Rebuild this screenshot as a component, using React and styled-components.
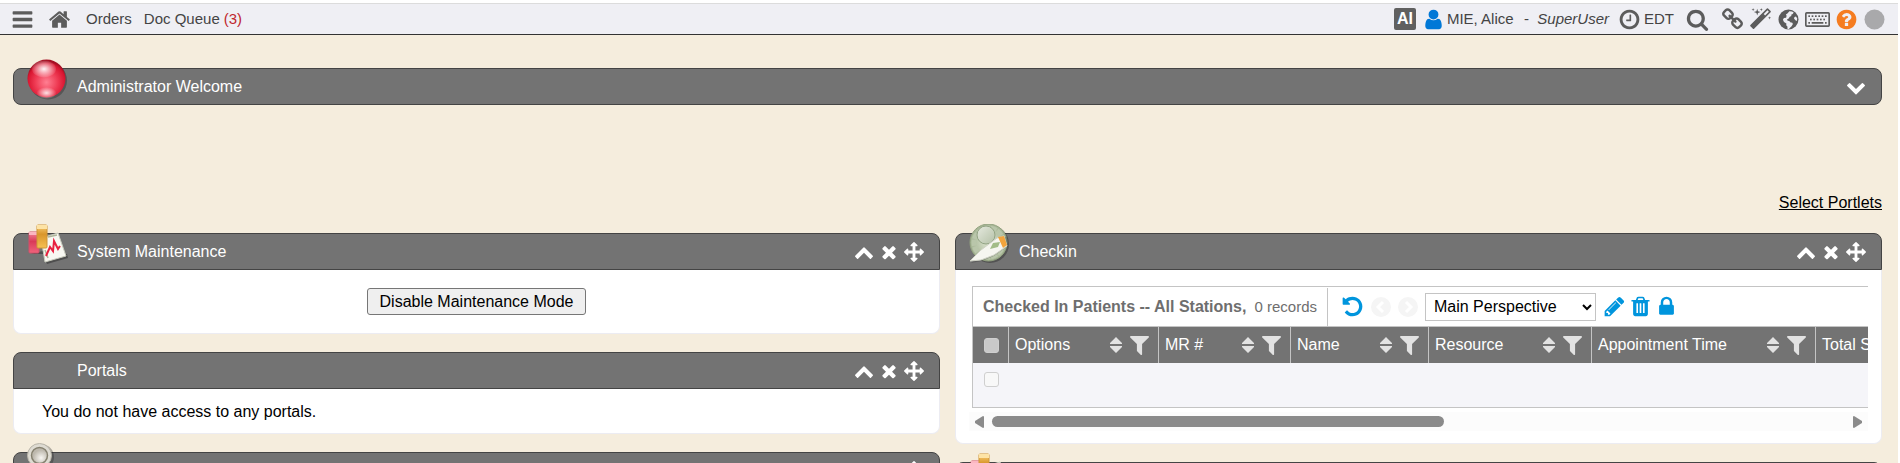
import React from 'react';
import styled, { createGlobalStyle } from 'styled-components';

const GlobalStyle = createGlobalStyle`
  * { box-sizing: border-box; }
  body {
    margin: 0;
    background: #fff;
    color: #000;
    font: 16px/18px "Liberation Sans", Arial, sans-serif;
  }
  button, select, input { font: inherit; margin: 0; }
`;

const PATHS = {
  bars: 'M1664 1344v128q0 26-19 45t-45 19h-1408q-26 0-45-19t-19-45v-128q0-26 19-45t45-19h1408q26 0 45 19t19 45zm0-512v128q0 26-19 45t-45 19h-1408q-26 0-45-19t-19-45v-128q0-26 19-45t45-19h1408q26 0 45 19t19 45zm0-512v128q0 26-19 45t-45 19h-1408q-26 0-45-19t-19-45v-128q0-26 19-45t45-19h1408q26 0 45 19t19 45z',
  home: 'M1472 992v480q0 26-19 45t-45 19h-384v-384h-256v384h-384q-26 0-45-19t-19-45v-480q0-1 .5-3t.5-3l575-474 575 474q1 2 1 6zm223-69l-62 74q-8 9-21 11h-3q-13 0-21-7l-692-577-692 577q-12 8-24 7-13-2-21-11l-62-74q-8-10-7-23.5t11-21.5l719-599q32-26 76-26t76 26l244 204v-195q0-14 9-23t23-9h192q14 0 23 9t9 23v408l219 182q10 8 11 21.5t-7 23.5z',
  user: 'M1536 1399q0 109-62.5 187t-150.5 78h-854q-88 0-150.5-78t-62.5-187q0-85 8.5-160.5t31.5-152 58.5-131 94-89 134.5-34.5q131 128 313 128t313-128q76 0 134.5 34.5t94 89 58.5 131 31.5 152 8.5 160.5zm-256-887q0 159-112.5 271.5t-271.5 112.5-271.5-112.5-112.5-271.5 112.5-271.5 271.5-112.5 271.5 112.5 112.5 271.5z',
  clock: 'M1024 544v448q0 14-9 23t-23 9h-320q-14 0-23-9t-9-23v-64q0-14 9-23t23-9h224v-352q0-14 9-23t23-9h64q14 0 23 9t9 23zm416 352q0-148-73-273t-198-198-273-73-273 73-198 198-73 273 73 273 198 198 273 73 273-73 198-198 73-273zm224 0q0 209-103 385.5t-279.5 279.5-385.5 103-385.5-103-279.5-279.5-103-385.5 103-385.5 279.5-279.5 385.5-103 385.5 103 279.5 279.5 103 385.5z',
  search: 'M1216 832q0-185-131.5-316.5t-316.5-131.5-316.5 131.5-131.5 316.5 131.5 316.5 316.5 131.5 316.5-131.5 131.5-316.5zm512 832q0 52-38 90t-90 38q-54 0-90-38l-343-342q-179 124-399 124-143 0-273.5-55.5t-225-150-150-225-55.5-273.5 55.5-273.5 150-225 225-150 273.5-55.5 273.5 55.5 225 150 150 225 55.5 273.5q0 220-124 399l343 343q37 37 37 90z',
  link: 'M1520 1216q0-40-28-68l-208-208q-28-28-68-28-42 0-72 32 3 3 19 18.5t21.5 21.5 15 19 13 25.5 3.5 27.5q0 40-28 68t-68 28q-15 0-27.5-3.5t-25.5-13-19-15-21.5-21.5-18.5-19q-33 31-33 73 0 40 28 68l206 207q27 27 68 27 40 0 68-26l147-146q28-28 28-67zm-703-705q0-40-28-68l-206-207q-28-28-68-28-39 0-68 27l-147 146q-28 28-28 67 0 40 28 68l208 208q27 27 68 27 42 0 72-31-3-3-19-18.5t-21.5-21.5-15-19-13-25.5-3.5-27.5q0-40 28-68t68-28q15 0 27.5 3.5t25.5 13 19 15 21.5 21.5 18.5 19q33-31 33-73zm895 705q0 120-85 203l-147 146q-83 83-203 83-121 0-204-85l-206-207q-83-83-83-203 0-123 88-209l-88-88q-86 88-208 88-120 0-204-84l-208-208q-84-84-84-204t85-203l147-146q83-83 203-83 121 0 204 85l206 207q83 83 83 203 0 123-88 209l88 88q86-88 208-88 120 0 204 84l208 208q84 84 84 204z',
  magic: 'M1254 581l293-293-107-107-293 293zm447-293q0 27-18 45l-1286 1286q-18 18-45 18t-45-18l-198-198q-18-18-18-45t18-45l1286-1286q18-18 45-18t45 18l198 198q18 18 18 45zm-1351-190l98 30-98 30-30 98-30-98-98-30 98-30 30-98zm350 162l196 60-196 60-60 196-60-196-196-60 196-60 60-196zm930 478l98 30-98 30-30 98-30-98-98-30 98-30 30-98zm-640-640l98 30-98 30-30 98-30-98-98-30 98-30 30-98z',
  help: 'M1024 1376v-192q0-14-9-23t-23-9h-192q-14 0-23 9t-9 23v192q0 14 9 23t23 9h192q14 0 23-9t9-23zm256-672q0-88-55.5-163t-138.5-116-170-41q-243 0-371 213-15 24 8 42l132 100q7 6 19 6 16 0 25-12 53-68 86-92 34-24 86-24 48 0 85.5 26t37.5 59q0 38-20 61t-68 45q-63 28-115.5 86.5t-52.5 125.5v36q0 14 9 23t23 9h192q14 0 23-9t9-23q0-19 21.5-49.5t54.5-49.5q32-18 49-28.5t46-35 44.5-48 28-60.5 12.5-81zm384 192q0 209-103 385.5t-279.5 279.5-385.5 103-385.5-103-279.5-279.5-103-385.5 103-385.5 279.5-279.5 385.5-103 385.5 103 279.5 279.5 103 385.5z',
  undo: 'M1664 896q0 156-61 298t-164 245-245 164-298 61q-172 0-327-72.5t-264-204.5q-7-10-6.5-22.5t8.5-20.5l137-138q10-9 25-9 16 2 23 12 73 95 179 147t225 52q104 0 198.5-40.5t163.5-109.5 109.5-163.5 40.5-198.5-40.5-198.5-109.5-163.5-163.5-109.5-198.5-40.5q-98 0-188 35.5t-160 101.5l137 138q31 30 14 69-17 40-59 40h-448q-26 0-45-19t-19-45v-448q0-42 40-59 39-17 69 14l130 129q107-101 244.5-156.5t284.5-55.5q156 0 298 61t245 164 164 245 61 298z',
  filter: 'M1595 295q17 41-14 70l-493 493v742q0 42-39 59-13 5-25 5-27 0-45-19l-256-256q-19-19-19-45v-486l-493-493q-31-29-14-70 17-39 59-39h1280q42 0 59 39z',
  lock: 'M640 768h512v-192q0-106-75-181t-181-75-181 75-75 181v192zm832 96v576q0 40-28 68t-68 28h-960q-40 0-68-28t-28-68v-576q0-40 28-68t68-28h32v-192q0-184 132-316t316-132 316 132 132 316v192h32q40 0 68 28t28 68z',
  pencil: 'M491 1536l91-91-235-235-91 91v107h128v128h107zm523-928q0-22-22-22-10 0-17 7l-542 542q-7 7-7 17 0 22 22 22 10 0 17-7l542-542q7-7 7-17zm-54-192l416 416-832 832h-416v-416zm683 96q0 53-37 90l-166 166-416-416 166-165q36-38 90-38 53 0 91 38l235 234q37 39 37 91z',
  trash: 'M704 1376v-704q0-14-9-23t-23-9h-64q-14 0-23 9t-9 23v704q0 14 9 23t23 9h64q14 0 23-9t9-23zm256 0v-704q0-14-9-23t-23-9h-64q-14 0-23 9t-9 23v704q0 14 9 23t23 9h64q14 0 23-9t9-23zm256 0v-704q0-14-9-23t-23-9h-64q-14 0-23 9t-9 23v704q0 14 9 23t23 9h64q14 0 23-9t9-23zm-544-992h448l-48-117q-7-9-17-11h-317q-10 2-17 11zm928 32v64q0 14-9 23t-23 9h-96v948q0 83-47 143.5t-113 60.5h-832q-66 0-113-58.5t-47-141.5v-952h-96q-14 0-23-9t-9-23v-64q0-14 9-23t23-9h309l70-167q15-37 54-63t79-26h320q40 0 79 26t54 63l70 167h309q14 0 23 9t9 23z',
  up: 'M1683 1331l-166 165q-19 19-45 19t-45-19l-531-531-531 531q-19 19-45 19t-45-19l-166-165q-19-19-19-45.5t19-45.5l742-741q19-19 45-19t45 19l742 741q19 19 19 45.5t-19 45.5z',
  down: 'M1683 808l-742 741q-19 19-45 19t-45-19l-742-741q-19-19-19-45.5t19-45.5l166-165q19-19 45-19t45 19l531 531 531-531q19-19 45-19t45 19l166 165q19 19 19 45.5t-19 45.5z',
  close: 'M1490 1322q0 40-28 68l-136 136q-28 28-68 28t-68-28l-294-294-294 294q-28 28-68 28t-68-28l-136-136q-28-28-28-68t28-68l294-294-294-294q-28-28-28-68t28-68l136-136q28-28 68-28t68 28l294 294 294-294q28-28 68-28t68 28l136 136q28 28 28 68t-28 68l-294 294 294 294q28 28 28 68z',
  move: 'M1792 896q0 26-19 45l-256 256q-19 19-45 19t-45-19-19-45v-128h-384v384h128q26 0 45 19t19 45-19 45l-256 256q-19 19-45 19t-45-19l-256-256q-19-19-19-45t19-45 45-19h128v-384h-384v128q0 26-19 45t-45 19-45-19l-256-256q-19-19-19-45t19-45l256-256q19-19 45-19t45 19 19 45v128h384v-384h-128q-26 0-45-19t-19-45 19-45l256-256q19-19 45-19t45 19l256 256q19 19 19 45t-19 45-45 19h-128v384h384v-128q0-26 19-45t45-19 45 19l256 256q19 19 19 45z',
};

const Icon = ({ name, size = 23, box = '0 0 1792 1792' }) => (
  <svg width={size} height={size} viewBox={box} fill="currentColor" aria-hidden="true">
    <path d={PATHS[name]} />
  </svg>
);

const GlobeIcon = () => (
  <svg width="23" height="23" viewBox="0 0 23 23" aria-hidden="true">
    <circle cx="11.5" cy="11.5" r="10" fill="currentColor" />
    <path
      fill="#efeff4"
      d="M12.4 3.2l2.6.4 1.700 1-1 1.400-1.500.8.2 1.200-1.700.8-1 1.800-1.600.6.5 1.500 1.700.2.900 1.300 2.100.6.6 1.300-1.300 2.200-1.600 1.400-1.200 1.600-1.300-.3-.1-2.400-1.200-1.400.2-1.700-2.400-1.600-1.100-2.100 1-1.700 2.200-.4.500-2-.7-1.200 1.500-1zM17.500 9l1.500-.6 1.200 2.200-.3 2.400-1.500-.8-1.400-1.700z"
    />
  </svg>
);

const KeyboardIcon = () => (
  <svg width="25" height="23" viewBox="0 0 1920 1766" fill="currentColor" aria-hidden="true">
    <rect x="64" y="371" width="1792" height="1024" rx="64" fill="none" stroke="currentColor" strokeWidth="128" />
    {[256, 512, 768, 1024, 1280, 1536].map((x) => (
      <rect key={x} x={x} y="563" width="128" height="128" />
    ))}
    {[384, 640, 896, 1152, 1408].map((x) => (
      <rect key={x} x={x} y="819" width="128" height="128" />
    ))}
    <path d="M256 1075h128v128H256zM512 1075h896v128H512zM1536 1075h128v128h-128z" />
  </svg>
);

const DotIcon = () => (
  <svg width="23" height="23" viewBox="0 0 23 23" aria-hidden="true">
    <circle cx="11.5" cy="11.5" r="10" fill="#a9a9ab" />
  </svg>
);

const PagerIcon = ({ next }) => (
  <svg width="20" height="20" viewBox="0 0 20 20" fill="none" aria-hidden="true">
    <circle cx="10" cy="10" r="10" fill="#f5f5f5" />
    <path d={next ? 'M8 5l5 5-5 5' : 'M12 5l-5 5 5 5'} stroke="#fff" strokeWidth="3" />
  </svg>
);

const SortIcon = () => (
  <svg width="12" height="16" viewBox="0 0 12 16" fill="currentColor" aria-hidden="true">
    <path d="M6 0l6 6v1H0V6zM0 9h12v1l-6 6-6-6z" />
  </svg>
);

const SphereArt = () => (
  <svg width="42" height="42" viewBox="0 0 42 42" aria-hidden="true">
    <defs>
      <radialGradient id="redBall" cx=".5" cy=".6" r=".55">
        <stop offset="0" stopColor="#ff7f92" />
        <stop offset=".55" stopColor="#ee3a53" />
        <stop offset=".9" stopColor="#d8142f" />
        <stop offset="1" stopColor="#a50f23" />
      </radialGradient>
      <radialGradient id="redShine">
        <stop offset="0" stopColor="#fff" stopOpacity=".95" />
        <stop offset="1" stopColor="#fff" stopOpacity=".1" />
      </radialGradient>
      <radialGradient id="redGlow">
        <stop offset="0" stopColor="#fff" stopOpacity=".85" />
        <stop offset="1" stopColor="#fff" stopOpacity="0" />
      </radialGradient>
    </defs>
    <circle cx="21" cy="21.5" r="19" fill="#333" opacity=".45" />
    <circle cx="19.5" cy="19.5" r="19" fill="url(#redBall)" />
    <ellipse cx="17" cy="10" rx="12" ry="8.5" fill="url(#redShine)" />
    <ellipse cx="19.5" cy="34" rx="10" ry="6" fill="url(#redGlow)" />
  </svg>
);

const ChartArt = () => (
  <svg width="42" height="42" viewBox="0 0 42 42" aria-hidden="true">
    <defs>
      <linearGradient id="redBar" x1="0" y1="0" x2="0" y2="1">
        <stop offset="0" stopColor="#f4899c" />
        <stop offset=".45" stopColor="#d93a58" />
        <stop offset="1" stopColor="#f0647c" />
      </linearGradient>
      <linearGradient id="goldBar" x1="0" y1="0" x2="0" y2="1">
        <stop offset="0" stopColor="#fbd27a" />
        <stop offset=".4" stopColor="#d9962b" />
        <stop offset="1" stopColor="#f6c052" />
      </linearGradient>
    </defs>
    <path d="M3 30h13l4 10 21-6-1-4-20-4z" fill="#222" opacity=".45" />
    <path d="M14 14L31 9l8 23-21 6z" fill="#f8f8f2" stroke="#c9cbbd" />
    <path d="M21 13l9-2M21 34l-3-8" stroke="#aeb69a" strokeWidth="1.5" />
    <path d="M19 32l4-9 3 4 1-10 4 8 2-3" fill="none" stroke="#e8203f" strokeWidth="2" />
    <rect x="2" y="8" width="10" height="21" rx="1" fill="url(#redBar)" stroke="#d2506a" />
    <path d="M2 8h10v3H2z" fill="#fbb6c1" />
    <rect x="10" y="1" width="10" height="23" rx="1" fill="url(#goldBar)" stroke="#cf9537" />
    <path d="M10 1h10v4H10z" fill="#fde3a5" />
  </svg>
);

const CheckinArt = () => (
  <svg width="42" height="42" viewBox="0 0 42 42" aria-hidden="true">
    <defs>
      <radialGradient id="greenDisc">
        <stop offset="0" stopColor="#dfe6d2" />
        <stop offset="1" stopColor="#a3b392" />
      </radialGradient>
      <linearGradient id="greenFace" x1="0" y1="0" x2="1" y2="1">
        <stop offset="0" stopColor="#e6eadf" />
        <stop offset="1" stopColor="#b3c0a6" />
      </linearGradient>
    </defs>
    <circle cx="21" cy="20" r="19" fill="#222" opacity=".4" />
    <circle cx="19.5" cy="18.5" r="18.5" fill="url(#greenDisc)" stroke="#94a481" />
    <circle cx="19.5" cy="18.5" r="14.5" fill="none" stroke="#b9c6aa" strokeWidth="5" strokeDasharray="6 1" />
    <circle cx="17" cy="11" r="9" fill="url(#greenFace)" stroke="#93a484" />
    <path d="M2 39L14 28 31 14l7-1 1 9-14 10-12 5z" fill="#333" opacity=".3" />
    <path d="M1 37l11-11 16-12 7-2 3 10-13 9-13 5z" fill="#f6f6f0" stroke="#cfd2c5" />
    <path d="M29 13l6-1 3 9-4 3z" fill="#f2a43c" />
    <path d="M21 25l3-6 7-1-2 5z" fill="#a3bd88" />
  </svg>
);

const StethoscopeArt = () => (
  <svg width="42" height="42" viewBox="0 0 42 42" aria-hidden="true">
    <defs>
      <radialGradient id="silver" cx=".6" cy=".65">
        <stop offset="0" stopColor="#f8f6f2" />
        <stop offset="1" stopColor="#bdb8ad" />
      </radialGradient>
    </defs>
    <circle cx="14" cy="14" r="13" fill="#222" opacity=".35" />
    <circle cx="12.5" cy="12.5" r="12" fill="#dedbd2" stroke="#b8b4a8" />
    <circle cx="12.5" cy="12.5" r="8" fill="url(#silver)" stroke="#85806f" strokeWidth="1.5" />
  </svg>
);

const Page = styled.div`
  height: 100vh;
  overflow: hidden;
  display: flex;
  flex-direction: column;
  padding: 3px 2px 0 0;
`;

const TopBar = styled.header`
  flex: none;
  display: flex;
  align-items: center;
  justify-content: space-between;
  height: 32px;
  padding: 0 12px 0 11px;
  border-top: 1px solid #dcdcdc;
  border-bottom: 1px solid #333;
  background: #efeff4;
  color: #444;
  font-size: 15px;
`;

const BarGroup = styled.div`
  display: flex;
  align-items: center;
  gap: ${(p) => p.$gap}px;
`;

const IconButton = styled.button`
  display: flex;
  flex: none;
  padding: 0;
  border: 0;
  background: none;
  color: ${(p) => p.$color || '#5c5c5c'};
  cursor: pointer;
`;

const BarLink = styled.a`
  display: flex;
  align-items: center;
  gap: ${(p) => p.$gap || 4}px;
  color: inherit;
  text-decoration: none;
  white-space: nowrap;
`;

const Count = styled.span`
  color: #c0282d;
`;

const AiButton = styled.button`
  width: 22px;
  height: 22px;
  padding: 0;
  border: 0;
  border-radius: 2px;
  background: #606060;
  color: #fff;
  font-size: 16px;
  font-weight: bold;
  line-height: 22px;
`;

const UserIcon = styled.span`
  display: flex;
  color: #0078d7;
`;

const ClockIcon = styled.span`
  display: flex;
  color: #5c5c5c;
`;

const Role = styled.span`
  white-space: pre;
`;

const Content = styled.main`
  flex: 1;
  min-height: 0;
  padding: 33px 16px 0 13px;
  background: #f5eddd;
`;

const PortletLinkRow = styled.div`
  display: flex;
  justify-content: flex-end;
  padding: 89px 0 21px;
`;

const PortletLink = styled.a`
  color: #000;
`;

const Columns = styled.div`
  display: grid;
  grid-template-columns: minmax(0, 1fr) minmax(0, 1fr);
  align-items: start;
  gap: 15px;
`;

const Column = styled.div`
  display: flex;
  flex-direction: column;
  gap: 18px;
`;

const PanelHeader = styled.div`
  position: relative;
  display: flex;
  align-items: center;
  justify-content: space-between;
  height: 37px;
  padding: 0 15px 0 63px;
  border: 1px solid #444;
  border-radius: ${(p) => (p.$closed ? '8px' : '8px 8px 0 0')};
  background: #737373;
  color: #fff;
`;

const PanelArt = styled.span`
  position: absolute;
  left: 13px;
  top: -10px;
  display: flex;
`;

const PanelTitle = styled.h2`
  margin: 0;
  font-size: 16px;
  font-weight: normal;
`;

const PanelTools = styled.div`
  display: flex;
  gap: 5px;
`;

const PanelBody = styled.div`
  padding: ${(p) => p.$pad};
  border: 1px solid #ececf2;
  border-top: 0;
  border-radius: 0 0 8px 8px;
  background: #fff;
  text-align: ${(p) => (p.$center ? 'center' : 'left')};
`;

const ModeButton = styled.button`
  display: block;
  height: 27px;
  margin: 0 auto;
  padding: 0 12px;
  border: 1px solid #767676;
  border-radius: 3px;
  background: #efefef;
  color: #000;
`;

const Grid = styled.section`
  overflow: hidden;
  border: 1px solid #c4c4c4;
  border-right: 0;
`;

const GridToolbar = styled.div`
  display: flex;
  align-items: center;
  height: 40px;
  border-bottom: 1px solid #c4c4c4;
`;

const GridCaption = styled.div`
  align-self: stretch;
  display: flex;
  align-items: center;
  gap: 8px;
  margin-top: 1px;
  padding: 0 10px;
  border-right: 1px solid #c4c4c4;
  color: #6e6e6e;
  white-space: nowrap;
`;

const RecordCount = styled.span`
  font-size: 15px;
`;

const GridTools = styled.div`
  display: flex;
  align-items: center;
  gap: 7px;
  padding-left: 13px;
`;

const GridActions = styled.div`
  display: flex;
  align-items: center;
  gap: 3px;
`;

const Perspective = styled.select`
  width: 171px;
  height: 28px;
  padding: 0 0 0 4px;
  border: 1px solid #c4c4c4;
  border-radius: 0;
  background: #fff;
  color: #000;
`;

const Table = styled.table`
  width: 1002px;
  table-layout: fixed;
  border-spacing: 0;
`;

const HeadCell = styled.th`
  width: ${(p) => p.$width}px;
  height: 36px;
  padding: 0;
  border-right: 1px solid #c4c4c4;
  background: #737373;
  color: #fff;
  font-weight: normal;
  text-align: left;
`;

const HeadInner = styled.div`
  display: flex;
  align-items: center;
  gap: 8px;
  padding: 0 9px 0 6px;
  color: #fff;
`;

const HeadLabel = styled.span`
  flex: 1;
  white-space: nowrap;
`;

const BodyCell = styled.td`
  height: 44px;
  padding: 9px 0 0 11px;
  background: #f5f5f9;
  vertical-align: top;
`;

const CheckBox = styled.input`
  appearance: none;
  display: block;
  width: 15px;
  height: 15px;
  margin: ${(p) => (p.$head ? '0 0 0 11px' : '0')};
  border: 1px solid #cfcfcf;
  border-radius: 3px;
  background: ${(p) => (p.$head ? '#c9c9c9' : '#f8f8f8')};
`;

const ScrollRow = styled.div`
  display: flex;
  align-items: center;
  gap: 8px;
  height: 19px;
  margin: 4px 0 0 -3px;
  padding: 0 6px;
  background: #fcfcfc;
`;

const ScrollTrack = styled.div`
  flex: 1;
`;

const ScrollThumb = styled.div`
  width: 53%;
  height: 11px;
  border-radius: 6px;
  background: #8b8b8b;
`;

const Arrow = ({ right }) => (
  <svg width="9" height="12" viewBox="0 0 9 12" fill="#8b8b8b" aria-hidden="true">
    <path d={right ? 'M0 1q0-1 1-1l8 5v2l-8 5q-1 0-1-1z' : 'M9 1q0-1-1-1L0 5v2l8 5q1 0 1-1z'} />
  </svg>
);

const Panel = ({ title, art, pad, center, children }) => (
  <section>
    <PanelHeader>
      {art && <PanelArt>{art}</PanelArt>}
      <PanelTitle>{title}</PanelTitle>
      <PanelTools>
        <IconButton $color="#fff" aria-label="Collapse"><Icon name="up" size={20} /></IconButton>
        <IconButton $color="#fff" aria-label="Close"><Icon name="close" size={20} /></IconButton>
        <IconButton $color="#fff" aria-label="Move"><Icon name="move" size={20} /></IconButton>
      </PanelTools>
    </PanelHeader>
    {children && <PanelBody $pad={pad} $center={center}>{children}</PanelBody>}
  </section>
);

const COLUMNS = [
  { label: 'Options', width: 150 },
  { label: 'MR #', width: 132 },
  { label: 'Name', width: 138 },
  { label: 'Resource', width: 163 },
  { label: 'Appointment Time', width: 224 },
  { label: 'Total Stay', width: 159 },
];

const CheckinGrid = () => (
  <>
    <Grid>
      <GridToolbar>
        <GridCaption>
          <b>Checked In Patients -- All Stations,</b>
          <RecordCount>0 records</RecordCount>
        </GridCaption>
        <GridTools>
          <IconButton $color="#0095dd" aria-label="Reload"><Icon name="undo" size={23} /></IconButton>
          <IconButton aria-label="Previous page"><PagerIcon /></IconButton>
          <IconButton aria-label="Next page"><PagerIcon next /></IconButton>
          <Perspective aria-label="Perspective" defaultValue="main">
            <option value="main">Main Perspective</option>
          </Perspective>
          <GridActions>
            <IconButton $color="#0095dd" aria-label="Edit"><Icon name="pencil" size={23} /></IconButton>
            <IconButton $color="#0095dd" aria-label="Delete"><Icon name="trash" size={23} /></IconButton>
            <IconButton $color="#0095dd" aria-label="Lock"><Icon name="lock" size={23} /></IconButton>
          </GridActions>
        </GridTools>
      </GridToolbar>
      <Table>
        <thead>
          <tr>
            <HeadCell $width={36}><CheckBox $head type="checkbox" disabled aria-label="Select all" /></HeadCell>
            {COLUMNS.map((c) => (
              <HeadCell key={c.label} $width={c.width}>
                <HeadInner>
                  <HeadLabel>{c.label}</HeadLabel>
                  <IconButton $color="#e2e2e2" aria-label={`Sort ${c.label}`}><SortIcon /></IconButton>
                  <IconButton $color="#e2e2e2" aria-label={`Filter ${c.label}`}>
                    <Icon name="filter" size={19} box="192 256 1408 1408" />
                  </IconButton>
                </HeadInner>
              </HeadCell>
            ))}
          </tr>
        </thead>
        <tbody>
          <tr>
            <BodyCell colSpan={7}><CheckBox type="checkbox" disabled aria-label="Select row" /></BodyCell>
          </tr>
        </tbody>
      </Table>
    </Grid>
    <ScrollRow>
      <IconButton aria-label="Scroll left"><Arrow /></IconButton>
      <ScrollTrack><ScrollThumb /></ScrollTrack>
      <IconButton aria-label="Scroll right"><Arrow right /></IconButton>
    </ScrollRow>
  </>
);

export default function App() {
  return (
    <>
      <GlobalStyle />
      <Page>
        <TopBar>
          <BarGroup $gap={15}>
            <BarGroup $gap={14}>
              <IconButton aria-label="Menu"><Icon name="bars" /></IconButton>
              <IconButton aria-label="Home"><Icon name="home" /></IconButton>
            </BarGroup>
            <BarGroup $gap={12}>
              <BarLink href="#orders">Orders</BarLink>
              <BarLink href="#queue">Doc Queue <Count>(3)</Count></BarLink>
            </BarGroup>
          </BarGroup>
          <BarGroup $gap={12}>
            <BarGroup $gap={9}>
              <BarGroup $gap={6}>
                <AiButton>AI</AiButton>
                <BarLink href="#user" $gap={2}>
                  <UserIcon><Icon name="user" /></UserIcon>
                  MIE, Alice
                  <Role>{'  -  '}<i>SuperUser</i></Role>
                </BarLink>
              </BarGroup>
              <BarLink href="#timezone" $gap={3}>
                <ClockIcon><Icon name="clock" /></ClockIcon>
                EDT
              </BarLink>
            </BarGroup>
            <IconButton aria-label="Search"><Icon name="search" /></IconButton>
            <BarGroup $gap={5}>
              <IconButton aria-label="Links"><Icon name="link" /></IconButton>
              <IconButton aria-label="Tools"><Icon name="magic" /></IconButton>
              <IconButton aria-label="Language"><GlobeIcon /></IconButton>
              <IconButton aria-label="Keyboard shortcuts"><KeyboardIcon /></IconButton>
              <IconButton $color="#f57c20" aria-label="Help"><Icon name="help" /></IconButton>
              <IconButton aria-label="Status"><DotIcon /></IconButton>
            </BarGroup>
          </BarGroup>
        </TopBar>
        <Content>
          <PanelHeader $closed>
            <PanelArt><SphereArt /></PanelArt>
            <PanelTitle>Administrator Welcome</PanelTitle>
            <IconButton $color="#fff" aria-label="Expand"><Icon name="down" size={20} /></IconButton>
          </PanelHeader>
          <PortletLinkRow>
            <PortletLink href="#portlets">Select Portlets</PortletLink>
          </PortletLinkRow>
          <Columns>
            <Column>
              <Panel title="System Maintenance" art={<ChartArt />} pad="18px" center>
                <ModeButton>Disable Maintenance Mode</ModeButton>
              </Panel>
              <Panel title="Portals" pad="14px 28px 12px">You do not have access to any portals.</Panel>
              <Panel art={<StethoscopeArt />} />
            </Column>
            <Column>
              <Panel title="Checkin" art={<CheckinArt />} pad="16px 13px 12px 16px">
                <CheckinGrid />
              </Panel>
              <Panel art={<ChartArt />} />
            </Column>
          </Columns>
        </Content>
      </Page>
    </>
  );
}
